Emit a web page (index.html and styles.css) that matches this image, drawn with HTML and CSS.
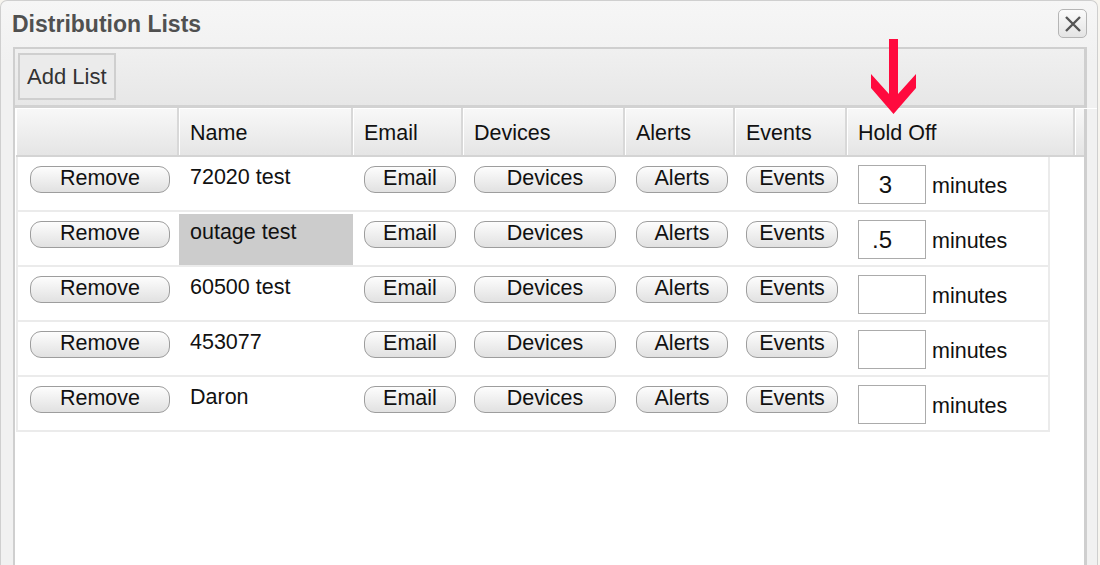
FILE: index.html
```html
<!DOCTYPE html>
<html lang="en">
<head>
  <meta charset="UTF-8">
  <title>Distribution Lists</title>
  <link rel="stylesheet" href="styles.css">
</head>
<body>

<div class="dialog">
  <div class="titlebar">
    <span class="title">Distribution Lists</span>
    <button class="close" title="Close">
      <svg width="18" height="18" viewBox="0 0 18 18">
        <path d="M2 2 L16 16 M16 2 L2 16" stroke="#555" stroke-width="2.4" fill="none"/>
      </svg>
    </button>
  </div>

  <div class="panel">
    <div class="toolbar">
      <button class="add-btn">Add List</button>
    </div>

    <div class="grid">
      <div class="grid-head">
        <div class="th"></div>
        <div class="th">Name</div>
        <div class="th">Email</div>
        <div class="th">Devices</div>
        <div class="th">Alerts</div>
        <div class="th">Events</div>
        <div class="th">Hold Off</div>
        <div class="th th-end"></div>
      </div>

      <div class="grid-body" id="rows">
        <!-- rows are added by JS -->
      </div>
    </div>
  </div>

  <svg class="arrow" width="48" height="78" viewBox="0 0 48 78">
    <polygon points="19,1 28,1 28,56 46,36 46,50 23.5,76 1,50 1,36 19,56" fill="#ff0a3e"/>
  </svg>
</div>

<script>
  const lists = [
    { name: "72020 test", holdOff: "3" },
    { name: "outage test", holdOff: ".5", selected: true },
    { name: "60500 test", holdOff: "" },
    { name: "453077", holdOff: "" },
    { name: "Daron", holdOff: "" }
  ];

  const body = document.getElementById("rows");

  lists.forEach(list => {
    const row = document.createElement("div");
    row.className = "row";
    row.innerHTML = `
      <div class="td"><button class="btn btn-remove">Remove</button></div>
      <div class="td name${list.selected ? " selected" : ""}"></div>
      <div class="td"><button class="btn btn-sm">Email</button></div>
      <div class="td"><button class="btn btn-wide">Devices</button></div>
      <div class="td"><button class="btn btn-sm">Alerts</button></div>
      <div class="td"><button class="btn btn-sm">Events</button></div>
      <div class="td hold"><input class="minutes" type="text"> <span>minutes</span></div>
    `;
    row.querySelector(".name").textContent = list.name;
    row.querySelector(".minutes").value = list.holdOff;
    body.appendChild(row);
  });
</script>

</body>
</html>
```

FILE: styles.css
```css
* {
  box-sizing: border-box;
}

body {
  margin: 0;
  background: #f7f5ef;
  font-family: "Liberation Sans", Arial, sans-serif;
  overflow: hidden;
}

.dialog {
  position: relative;
  width: 1098px;
  height: 100vh;
  border: 1px solid #cfcfcf;
  border-bottom: none;
  border-radius: 7px 7px 0 0;
  background: linear-gradient(#f6f6f6, #f1f1f1 60px);
  padding: 0 10px 0 12px;
  display: flex;
  flex-direction: column;
}

.titlebar {
  height: 46px;
  display: flex;
  justify-content: space-between;
  align-items: flex-start;
}

.title {
  margin: 10px 0 0 -1px;
  font-size: 23px;
  line-height: 26px;
  font-weight: bold;
  color: #505050;
}

.close {
  margin-top: 8px;
  width: 29px;
  height: 29px;
  padding: 0;
  border: 1px solid #b5b5b5;
  border-radius: 5px;
  background: linear-gradient(#fbfbfb, #e4e4e4);
  display: flex;
  align-items: center;
  justify-content: center;
  cursor: pointer;
}

.panel {
  flex: 1;
  border: 2px solid #cfcfcf;
  border-right-width: 3px;
  border-bottom: none;
  background: white;
}

.toolbar {
  height: 59px;
  padding: 4px 3px;
  background: linear-gradient(#f0f0f0, #e7e7e7);
  border-bottom: 3px solid #d2d2d2;
}

.add-btn {
  height: 47px;
  padding: 0 7px;
  border: 2px solid #cfcfcf;
  background: #ebebeb;
  font-family: inherit;
  font-size: 22px;
  color: #333;
  cursor: pointer;
}

.grid {
  padding-left: 1px;
}

.grid-head {
  display: grid;
  grid-template-columns: 163px 174px 110px 162px 110px 112px 228px 1fr;
  height: 49px;
  border-bottom: 2px solid #d4d4d4;
  background: linear-gradient(#f8f8f8, #e5e5e5);
}

.th {
  display: flex;
  align-items: center;
  padding: 4px 11px 0;
  font-size: 21.5px;
  color: #111;
  border-right: 2px solid #d8d8d8;
  box-shadow: inset 1px 1px 0 #fff;
}

.th-end {
  border-right: none;
}

.grid-body {
  width: max-content;
}

.row {
  display: grid;
  grid-template-columns: 161px 174px 110px 162px 110px 112px 201px;
  height: 55px;
  border: 2px solid #ebebeb;
  border-top: none;
}

.td {
  padding: 9px 11px 0;
  font-size: 21.5px;
  line-height: 23px;
  color: #111;
}

.td:first-child {
  padding-left: 12px;
}

.name.selected {
  margin-top: 2px;
  padding-top: 7px;
  background: #cccccc;
}

.btn {
  height: 27px;
  padding: 0 0 2px;
  border: 1px solid #9d9d9d;
  border-radius: 11px;
  background: linear-gradient(#fdfdfd, #e1e1e1);
  font-family: inherit;
  font-size: 21.5px;
  line-height: 23px;
  color: #111;
  cursor: pointer;
}

.btn-remove { width: 140px; }
.btn-sm { width: 92px; }
.btn-wide { width: 142px; }

.hold {
  display: flex;
  align-items: baseline;
  gap: 6px;
  padding-top: 8px;
}

.minutes {
  width: 68px;
  height: 39px;
  border: 1px solid #ababab;
  padding: 0 33px 0 0;
  text-align: right;
  font-family: inherit;
  font-size: 24px;
  color: #111;
}

.arrow {
  position: absolute;
  left: 869px;
  top: 37px;
}
```
